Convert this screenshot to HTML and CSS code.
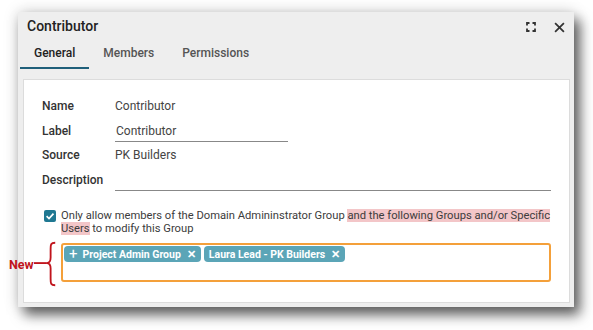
FILE: index.html
```html
<!DOCTYPE html>
<html lang="en">
<head>
  <meta charset="UTF-8" />
  <title>Contributor</title>
  <link rel="stylesheet" href="styles.css">
</head>
<body>
  <div class="dialog">
    <div class="dialog-header">
      <h2>Contributor</h2>
      <div class="header-actions">
        <svg class="icon-expand" viewBox="0 0 10 10" fill="none" stroke="#333" stroke-width="1.8">
          <path d="M1 3.5V1H3.5M6.5 1H9V3.5M9 6.5V9H6.5M3.5 9H1V6.5"/>
        </svg>
        <svg class="icon-close" viewBox="0 0 10 10" fill="none" stroke="#333" stroke-width="1.6">
          <path d="M1 1L9 9M9 1L1 9"/>
        </svg>
      </div>
    </div>

    <div class="tabs">
      <a class="tab active">General</a>
      <a class="tab">Members</a>
      <a class="tab">Permissions</a>
    </div>

    <div class="card">
      <div class="fields">
        <span class="field-label">Name</span>
        <span class="field-value">Contributor</span>

        <span class="field-label">Label</span>
        <span class="field-value"><span class="text-input short">Contributor</span></span>

        <span class="field-label">Source</span>
        <span class="field-value">PK Builders</span>

        <span class="field-label">Description</span>
        <span class="field-value"><span class="text-input"></span></span>
      </div>

      <div class="check-row">
        <span class="checkbox">
          <svg viewBox="0 0 12 12" fill="none" stroke="#fff" stroke-width="1.7">
            <path d="M2.6 6.2L5 8.5L9.5 3.6"/>
          </svg>
        </span>
        <p>Only allow members of the Domain Admininstrator Group <mark>and the following Groups and/or Specific Users</mark> to modify this Group</p>
      </div>

      <div class="tag-box">
        <span class="tag"><span class="tag-plus">+</span>Project Admin Group<span class="tag-x">&#x2715;</span></span>
        <span class="tag">Laura Lead - PK Builders<span class="tag-x">&#x2715;</span></span>
      </div>
    </div>
  </div>

  <!-- annotation -->
  <div class="annotation">
    <span>New</span>
    <svg viewBox="0 0 26 48" fill="none" stroke="#c0141c" stroke-width="2">
      <path d="M0 23H14"/>
      <path d="M23 1C18 1 18 3 18 8V17C18 21 17 23 14 23C17 23 18 25 18 29V40C18 45 18 47 23 47"/>
    </svg>
  </div>
</body>
</html>
```

FILE: styles.css
```css
* {
  box-sizing: border-box;
  margin: 0;
  padding: 0;
}

body {
  background: #ffffff;
  font-family: Roboto, 'Noto Sans', sans-serif;
  color: #444;
  padding: 12px 0 0 18px;
  position: relative;
  height: 330px;
  overflow: hidden;
}

.dialog {
  width: 556px;
  height: 295px;
  background: #eeeeee;
  box-shadow: 6px 8px 12px rgba(0, 0, 0, 0.6), 0 0 14px rgba(0, 0, 0, 0.18);
  display: flex;
  flex-direction: column;
}

.dialog-header {
  display: flex;
  align-items: center;
  justify-content: space-between;
  padding: 3px 9px 0 9px;
  height: 24px;
}

h2 {
  font-size: 14px;
  font-weight: 500;
  color: #222;
  line-height: 20px;
}

.header-actions {
  display: flex;
  align-items: center;
  gap: 18px;
  margin-top: 3px;
}

.icon-expand {
  width: 10px;
  height: 10px;
}

.icon-close {
  width: 11px;
  height: 11px;
}

.tabs {
  display: flex;
  margin: 5px 0 0 2px;
}

.tab {
  font-size: 12px;
  font-weight: 500;
  color: #555;
  line-height: 16px;
  padding: 4px 14px 6px;
  border-bottom: 2px solid transparent;
}

.tab.active {
  color: #222;
  border-bottom-color: #1f5f7a;
}

.card {
  flex: 1;
  margin: 10px 4px 4px 5px;
  background: #fff;
  border: 1px solid #dcdcdc;
  padding: 14px 18px 0 18px;
}

.fields {
  display: grid;
  grid-template-columns: 73px 1fr;
  grid-auto-rows: 24.5px;
  font-size: 12px;
  align-items: center;
}

.field-label {
  font-weight: 500;
  color: #333;
}

.field-value {
  color: #444;
}

.text-input {
  display: block;
  height: 22px;
  line-height: 22px;
  border-bottom: 1px solid #888;
  padding-left: 1px;
  margin-top: 1px;
}

.text-input.short {
  width: 173px;
}

.check-row {
  display: flex;
  align-items: flex-start;
  margin: 17px -8px 0 2px;
}

.checkbox {
  flex: none;
  width: 12px;
  height: 12px;
  background: #1f7892;
  border-radius: 2px;
  margin: 1px 5px 0 0;
  display: flex;
}

.checkbox svg {
  width: 12px;
  height: 12px;
}

.check-row p {
  font-size: 11.2px;
  line-height: 13px;
  color: #3c3c3c;
}

mark {
  background: #f3c6c8;
  color: #3c3c3c;
}

.tag-box {
  margin: 8px 0 0 19px;
  height: 39px;
  border: 2px solid #f4a03a;
  border-radius: 3px;
  padding: 1px;
  display: flex;
  align-items: flex-start;
  gap: 3px;
}

.tag {
  display: flex;
  align-items: center;
  height: 16px;
  background: #5ba5b7;
  color: #fff;
  font-size: 10.5px;
  font-weight: 700;
  border-radius: 4px;
  padding: 0 5px;
}

.tag-plus {
  font-size: 15px;
  font-weight: 400;
  margin-right: 5px;
}

.tag-x {
  font-size: 11px;
  margin-left: 6px;
}

.annotation {
  position: absolute;
  left: 9px;
  top: 240px;
  display: flex;
  align-items: center;
  color: #c0141c;
  font-size: 12.5px;
  font-weight: 700;
}

.annotation svg {
  width: 24px;
  height: 48px;
}
```
